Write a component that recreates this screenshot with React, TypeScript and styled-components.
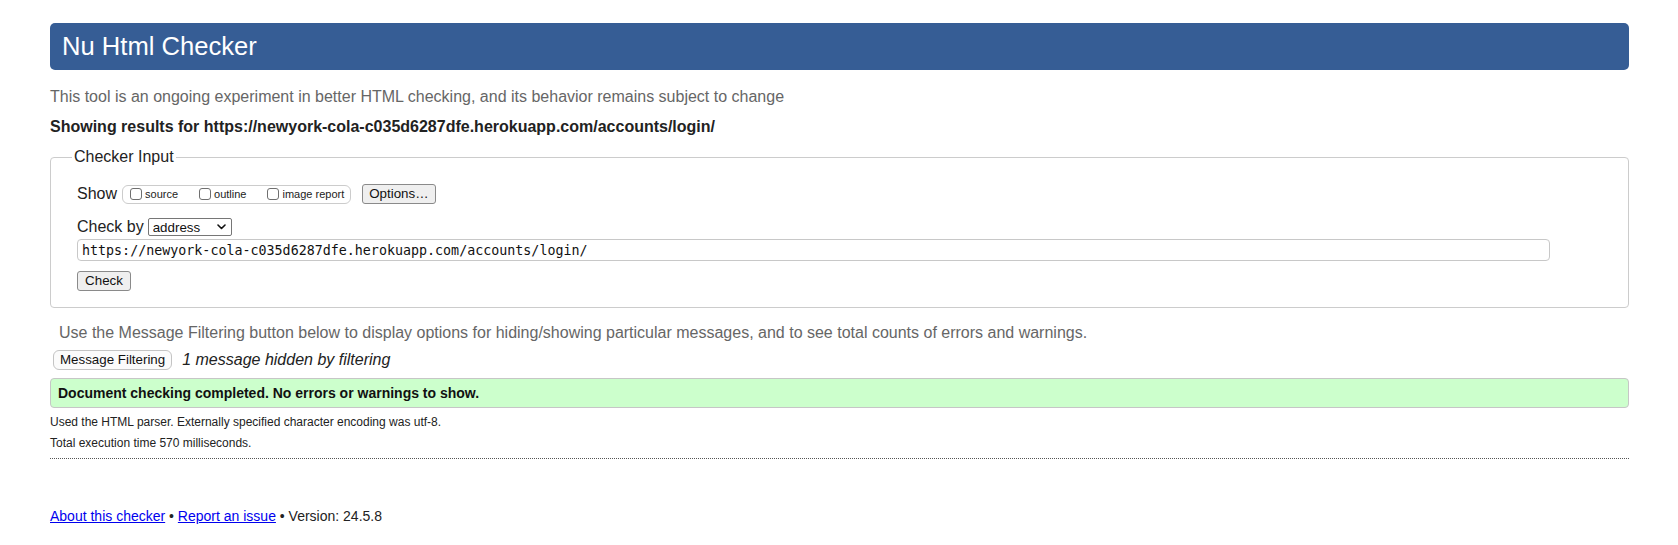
import React from "react";
import styled, { createGlobalStyle } from "styled-components";

const Global = createGlobalStyle`
  html, body { margin: 0; padding: 0; background: #ffffff; }
  body { font-family: "Liberation Sans", Arial, Helvetica, sans-serif; color: #222; }
`;

const Page = styled.div`
  padding: 23px 49px 30px 50px;
`;

const Title = styled.h1`
  margin: 0;
  height: 47px;
  line-height: 47px;
  padding-left: 12px;
  background: #365d95;
  color: #ffffff;
  font-weight: normal;
  font-size: 25.6px;
  border-radius: 5px;
`;

const Intro = styled.p`
  margin: 18px 0 0;
  font-size: 16px;
  line-height: 18px;
  color: #666;
`;

const Results = styled.p`
  margin: 12px 0 0;
  font-size: 16px;
  line-height: 18px;
  font-weight: bold;
  color: #222;
`;

const Fieldset = styled.fieldset`
  margin: 12px 0 0;
  padding: 0 0 16px;
  border: 1px solid #cccccc;
  border-radius: 4px;
  min-width: 0;
`;

const Legend = styled.legend`
  margin-left: 21px;
  padding: 0 2px;
  font-size: 16px;
  line-height: 18px;
  color: #222;
`;

const FormBody = styled.div`
  display: flex;
  flex-direction: column;
  padding: 18px 26px 0;
`;

const Row = styled.div<{ $mt?: number }>`
  display: flex;
  align-items: center;
  margin-top: ${(p) => p.$mt ?? 0}px;
  font-size: 16px;
  line-height: 18px;
`;

const Label = styled.span<{ $gap?: number }>`
  font-size: 16px;
  color: #222;
  margin-right: ${(p) => p.$gap ?? 5}px;
`;

const ShowGroup = styled.div`
  display: flex;
  align-items: center;
  height: 17px;
  padding: 0 6px 0 7px;
  border: 1px solid #cccccc;
  border-radius: 6px;
  gap: 21px;
`;

const CheckItem = styled.label`
  display: flex;
  align-items: center;
  font-size: 11px;
  color: #222;
`;

const Box = styled.input`
  appearance: none;
  margin: 0 3px 0 0;
  width: 12px;
  height: 12px;
  border: 1px solid #6f6f6f;
  border-radius: 3px;
  background: #ffffff;
`;

const Button = styled.button<{ $pill?: boolean }>`
  font-family: "Liberation Sans", Arial, Helvetica, sans-serif;
  font-size: 13.33px;
  line-height: 16px;
  color: #111;
  height: 20px;
  padding: 0 6px;
  background: ${(p) => (p.$pill ? "#fbfbfb" : "#efefef")};
  border: 1px solid ${(p) => (p.$pill ? "#c4c4c4" : "#8a8a8a")};
  border-radius: ${(p) => (p.$pill ? "6px" : "3px")};
`;

const OptionsButton = styled(Button)`
  margin-left: 11px;
  padding: 0 6px;
`;

const SelectWrap = styled.span`
  position: relative;
  display: inline-flex;
`;

const Select = styled.select`
  appearance: none;
  width: 84px;
  height: 18px;
  padding: 0 0 0 4px;
  font-family: "Liberation Sans", Arial, Helvetica, sans-serif;
  font-size: 13.33px;
  color: #111;
  background: #ffffff;
  border: 1px solid #767676;
  border-radius: 2px;
`;

const Chevron = styled.svg`
  position: absolute;
  right: 6px;
  top: 6px;
  pointer-events: none;
`;

const UrlInput = styled.input`
  margin-top: 3px;
  width: calc(100% - 52px);
  height: 22px;
  box-sizing: border-box;
  padding: 0 4px;
  font-family: "DejaVu Sans Mono", Menlo, monospace;
  font-size: 13.33px;
  color: #111;
  border: 1px solid #c8c8c8;
  border-radius: 4px;
  background: #ffffff;
`;

const CheckButton = styled(Button)`
  align-self: flex-start;
  margin-top: 10px;
  width: 54px;
`;

const Notice = styled.p`
  margin: 16px 0 0;
  padding-left: 9px;
  font-size: 16px;
  line-height: 18px;
  color: #666;
`;

const FilterRow = styled.div`
  display: flex;
  align-items: center;
  margin-top: 8px;
  padding-left: 3px;
  gap: 10px;
`;

const Hidden = styled.em`
  font-size: 16px;
  color: #222;
`;

const Success = styled.div`
  margin-top: 8px;
  height: 30px;
  box-sizing: border-box;
  display: flex;
  align-items: center;
  padding-left: 7px;
  background: #ccffcc;
  border: 1px solid #c6c6c6;
  border-radius: 4px;
  font-size: 14px;
  font-weight: bold;
  color: #111;
`;

const Detail = styled.p<{ $mt: number }>`
  margin: ${(p) => p.$mt}px 0 0;
  font-size: 12px;
  line-height: 14px;
  color: #222;
`;

const Rule = styled.hr`
  margin: 8px 0 0;
  border: 0;
  border-top: 1px dotted #555;
  height: 0;
`;

const Footer = styled.p`
  margin: 49px 0 0;
  font-size: 14px;
  line-height: 16px;
  color: #222;
`;

const Link = styled.a`
  color: #0000ee;
  text-decoration: underline;
`;

export default function App() {
  return (
    <>
      <Global />
      <Page>
        <Title>Nu Html Checker</Title>
        <Intro>
          This tool is an ongoing experiment in better HTML checking, and its behavior remains subject to change
        </Intro>
        <Results>Showing results for https://newyork-cola-c035d6287dfe.herokuapp.com/accounts/login/</Results>
        <Fieldset>
          <Legend>Checker Input</Legend>
          <FormBody>
            <Row>
              <Label>Show</Label>
              <ShowGroup>
                <CheckItem>
                  <Box type="checkbox" />
                  source
                </CheckItem>
                <CheckItem>
                  <Box type="checkbox" />
                  outline
                </CheckItem>
                <CheckItem>
                  <Box type="checkbox" />
                  image report
                </CheckItem>
              </ShowGroup>
              <OptionsButton>Options…</OptionsButton>
            </Row>
            <Row $mt={14}>
              <Label $gap={4}>Check by</Label>
              <SelectWrap>
                <Select defaultValue="address">
                  <option value="address">address</option>
                  <option value="file">file upload</option>
                  <option value="text">text input</option>
                </Select>
                <Chevron width="9" height="6" viewBox="0 0 9 6">
                  <path d="M1 1 L4.5 4.5 L8 1" fill="none" stroke="#111" strokeWidth="1.6" strokeLinecap="round" strokeLinejoin="round" />
                </Chevron>
              </SelectWrap>
            </Row>
            <UrlInput defaultValue="https://newyork-cola-c035d6287dfe.herokuapp.com/accounts/login/" />
            <CheckButton>Check</CheckButton>
          </FormBody>
        </Fieldset>
        <Notice>
          Use the Message Filtering button below to display options for hiding/showing particular messages, and to see total counts of errors and warnings.
        </Notice>
        <FilterRow>
          <Button $pill>Message Filtering</Button>
          <Hidden>1 message hidden by filtering</Hidden>
        </FilterRow>
        <Success>Document checking completed. No errors or warnings to show.</Success>
        <Detail $mt={7}>Used the HTML parser. Externally specified character encoding was utf-8.</Detail>
        <Detail $mt={7}>Total execution time 570 milliseconds.</Detail>
        <Rule />
        <Footer>
          <Link href="#about">About this checker</Link> • <Link href="#issue">Report an issue</Link> • Version: 24.5.8
        </Footer>
      </Page>
    </>
  );
}
